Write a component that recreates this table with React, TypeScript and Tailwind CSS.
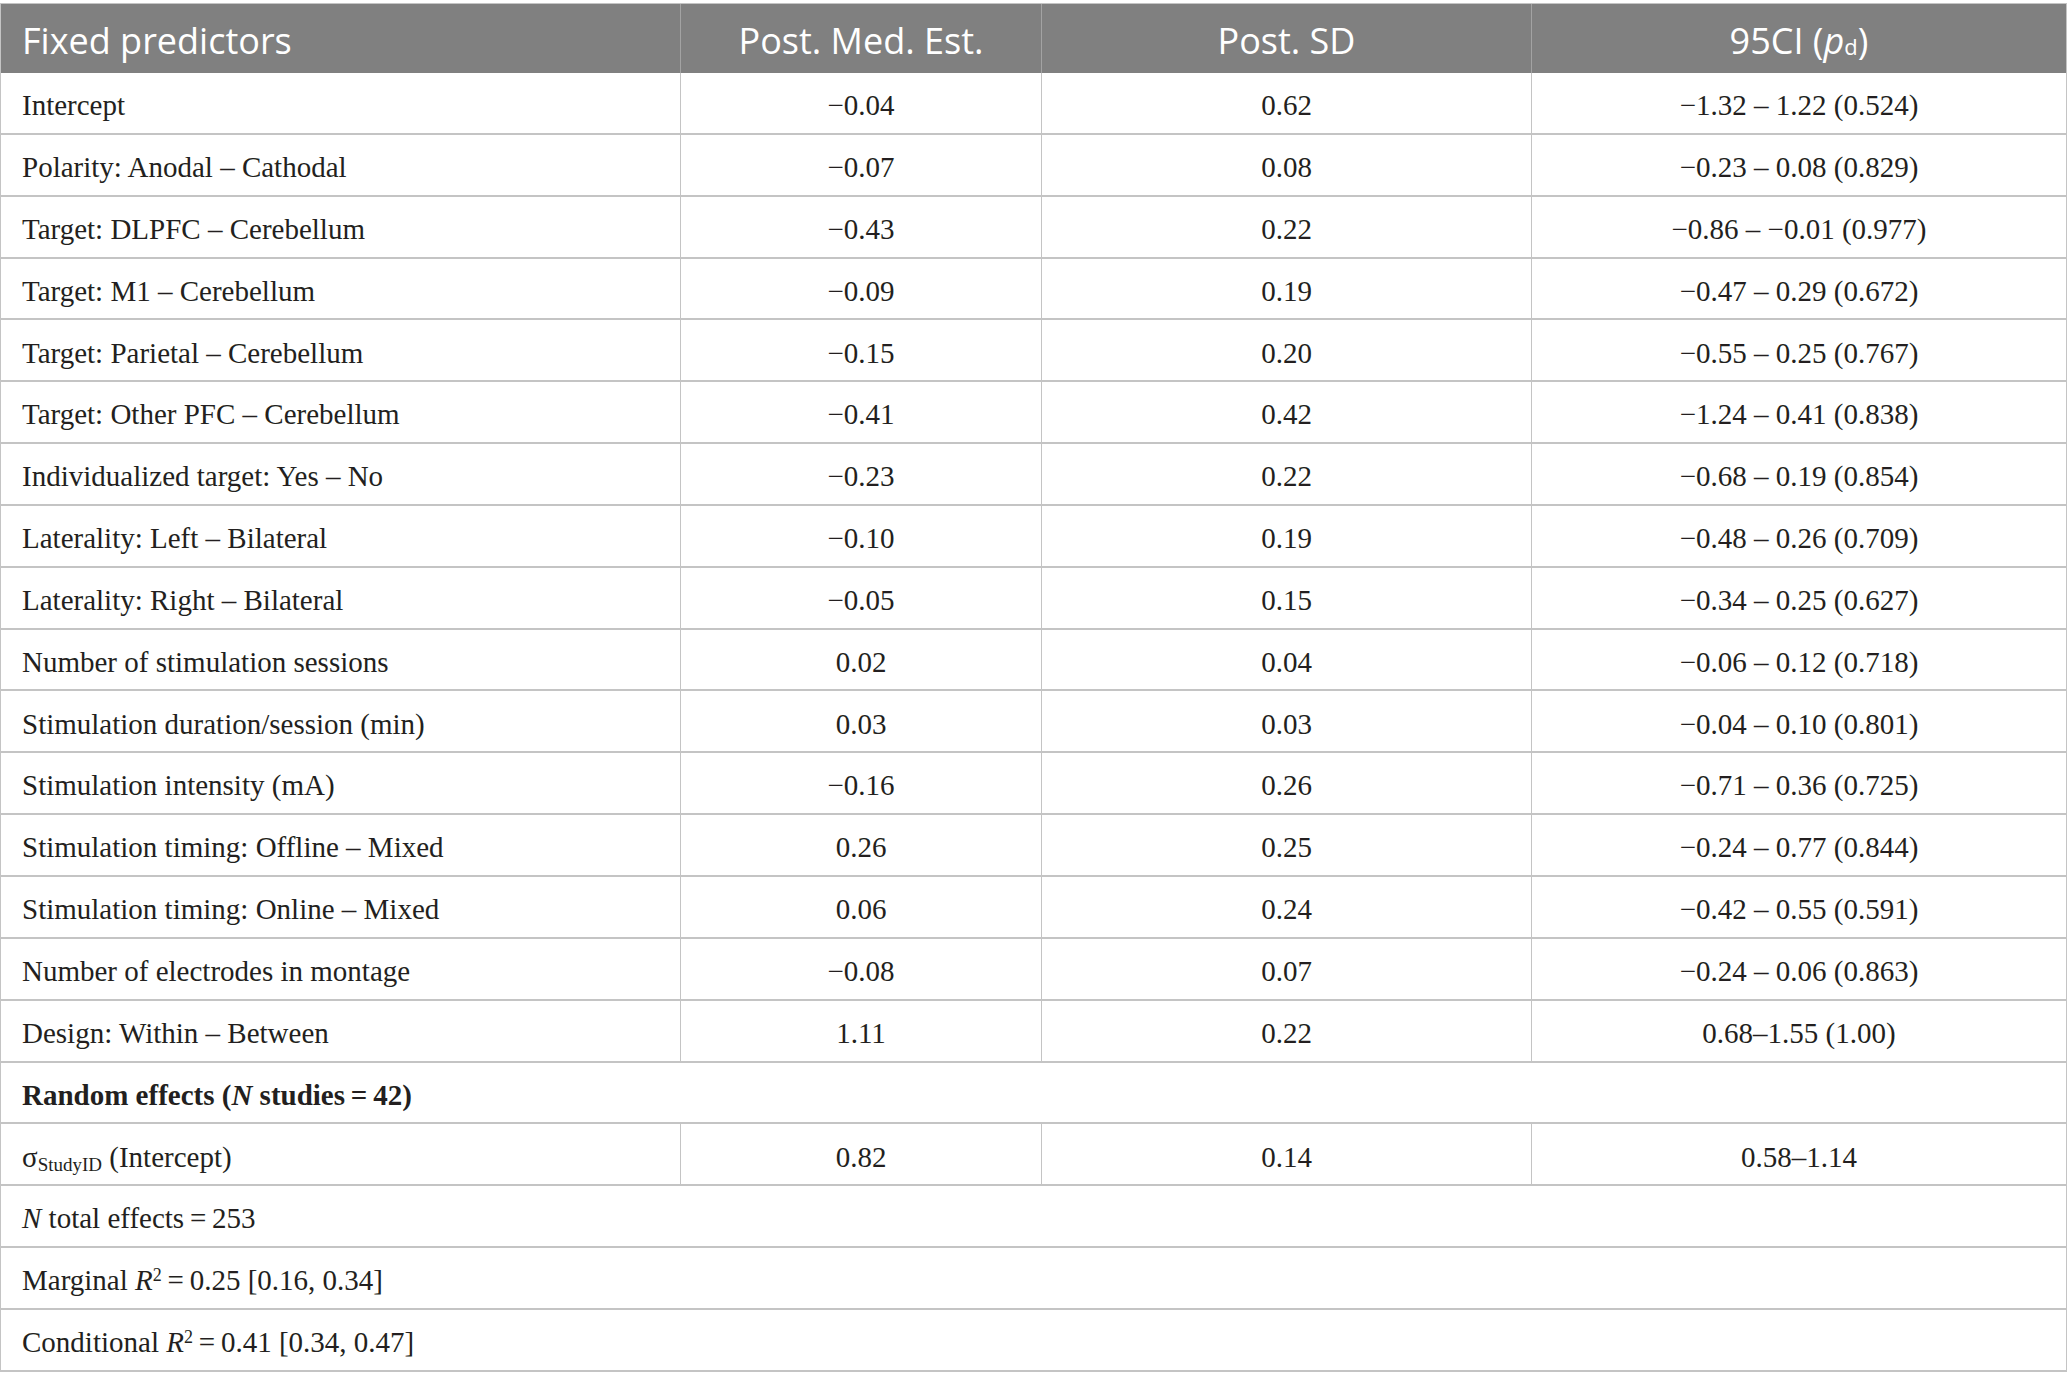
import React from 'react'

type Row = {
  label: React.ReactNode
  est: string
  sd: string
  ci: string
}

const rows: Row[] = [
  { label: 'Intercept', est: '−0.04', sd: '0.62', ci: '−1.32 – 1.22 (0.524)' },
  { label: 'Polarity: Anodal – Cathodal', est: '−0.07', sd: '0.08', ci: '−0.23 – 0.08 (0.829)' },
  { label: 'Target: DLPFC – Cerebellum', est: '−0.43', sd: '0.22', ci: '−0.86 – −0.01 (0.977)' },
  { label: 'Target: M1 – Cerebellum', est: '−0.09', sd: '0.19', ci: '−0.47 – 0.29 (0.672)' },
  { label: 'Target: Parietal – Cerebellum', est: '−0.15', sd: '0.20', ci: '−0.55 – 0.25 (0.767)' },
  { label: 'Target: Other PFC – Cerebellum', est: '−0.41', sd: '0.42', ci: '−1.24 – 0.41 (0.838)' },
  { label: 'Individualized target: Yes – No', est: '−0.23', sd: '0.22', ci: '−0.68 – 0.19 (0.854)' },
  { label: 'Laterality: Left – Bilateral', est: '−0.10', sd: '0.19', ci: '−0.48 – 0.26 (0.709)' },
  { label: 'Laterality: Right – Bilateral', est: '−0.05', sd: '0.15', ci: '−0.34 – 0.25 (0.627)' },
  { label: 'Number of stimulation sessions', est: '0.02', sd: '0.04', ci: '−0.06 – 0.12 (0.718)' },
  { label: 'Stimulation duration/session (min)', est: '0.03', sd: '0.03', ci: '−0.04 – 0.10 (0.801)' },
  { label: 'Stimulation intensity (mA)', est: '−0.16', sd: '0.26', ci: '−0.71 – 0.36 (0.725)' },
  { label: 'Stimulation timing: Offline – Mixed', est: '0.26', sd: '0.25', ci: '−0.24 – 0.77 (0.844)' },
  { label: 'Stimulation timing: Online – Mixed', est: '0.06', sd: '0.24', ci: '−0.42 – 0.55 (0.591)' },
  { label: 'Number of electrodes in montage', est: '−0.08', sd: '0.07', ci: '−0.24 – 0.06 (0.863)' },
  { label: 'Design: Within – Between', est: '1.11', sd: '0.22', ci: '0.68–1.55 (1.00)' },
]

const cols = 'grid grid-cols-[679px_361px_490px_1fr]'
const rowCls = 'h-[61.85px] border-b-2 border-[#c4c4c4]'
const cell = 'flex items-center justify-center border-l border-[#c4c4c4] pt-[6px]'

function DataRow({ row }: { row: Row }) {
  return (
    <div className={`${cols} ${rowCls}`}>
      <div className="flex items-center pl-[21px] pt-[6px]">{row.label}</div>
      <div className={cell}>{row.est}</div>
      <div className={cell}>{row.sd}</div>
      <div className={cell}>{row.ci}</div>
    </div>
  )
}

function SpanRow({ children, bold }: { children: React.ReactNode; bold?: boolean }) {
  return (
    <div className={`${rowCls} flex items-center pl-[21px] pt-[6px] ${bold ? 'font-bold' : ''}`}>
      {children}
    </div>
  )
}

export default function App() {
  return (
    <div className="min-h-[1391px] w-[2067px] bg-white pt-[3px]">
      <div className="border-x border-[#c4c4c4] font-['Liberation_Serif',serif] text-[29px] text-[#231f20]">
        <div
          className={`${cols} h-[70px] border-t border-[#c4c4c4] bg-[#808080] font-['Open_Sans',sans-serif] text-[36px] text-white`}
        >
          <div className="flex items-center pl-[21px] pt-[4px]">Fixed predictors</div>
          <div className="flex items-center justify-center border-l border-[#a3a3a3] pt-[4px]">Post. Med. Est.</div>
          <div className="flex items-center justify-center border-l border-[#a3a3a3] pt-[4px]">Post. SD</div>
          <div className="flex items-center justify-center border-l border-[#a3a3a3] pt-[4px]">
            95CI (<i>p</i>
            <sub className="text-[22px] leading-none">d</sub>)
          </div>
        </div>

        {rows.map((r, i) => (
          <DataRow key={i} row={r} />
        ))}

        <SpanRow bold>
          Random effects (<i>N</i>&nbsp;studies&#8201;=&#8201;42)
        </SpanRow>

        <DataRow
          row={{
            label: (
              <span>
                σ<sub className="text-[19px] leading-none">StudyID</sub> (Intercept)
              </span>
            ),
            est: '0.82',
            sd: '0.14',
            ci: '0.58–1.14',
          }}
        />

        <SpanRow>
          <span>
            <i>N</i> total effects&#8201;=&#8201;253
          </span>
        </SpanRow>
        <SpanRow>
          <span>
            Marginal <i>R</i>
            <sup className="text-[18px] leading-none">2</sup>&#8201;=&#8201;0.25 [0.16, 0.34]
          </span>
        </SpanRow>
        <SpanRow>
          <span>
            Conditional <i>R</i>
            <sup className="text-[18px] leading-none">2</sup>&#8201;=&#8201;0.41 [0.34, 0.47]
          </span>
        </SpanRow>
      </div>
    </div>
  )
}
